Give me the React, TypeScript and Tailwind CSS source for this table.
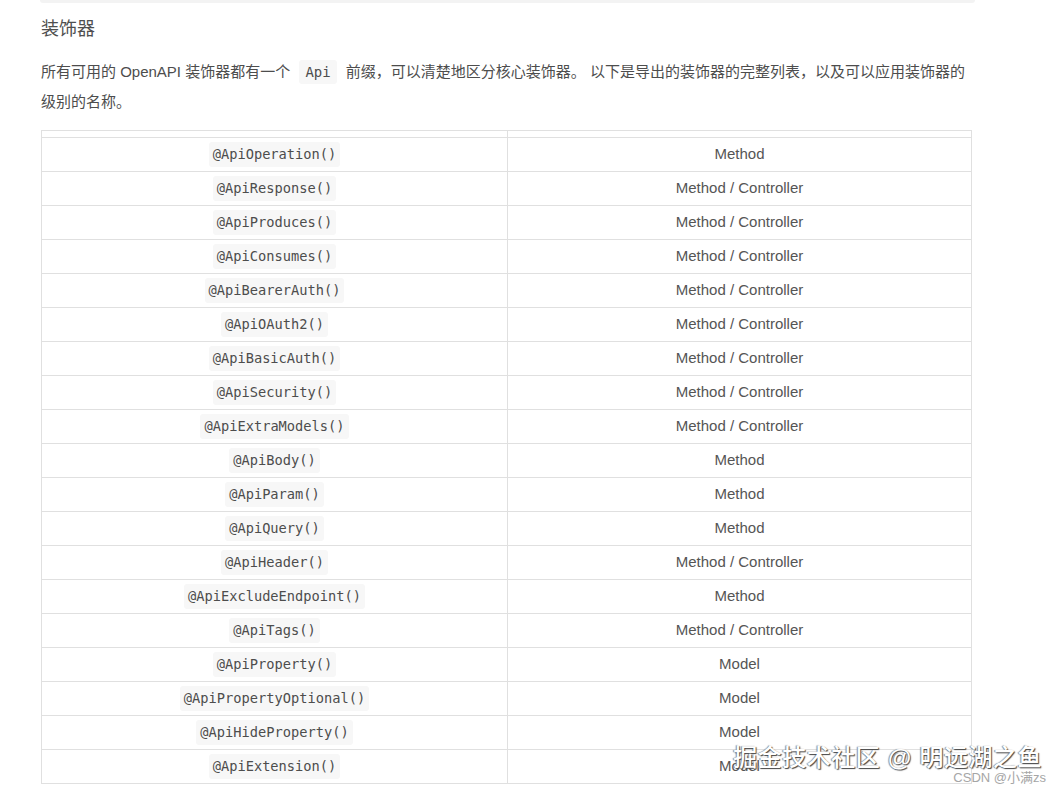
const rows: [string, string][] = [
  ["@ApiOperation()", "Method"],
  ["@ApiResponse()", "Method / Controller"],
  ["@ApiProduces()", "Method / Controller"],
  ["@ApiConsumes()", "Method / Controller"],
  ["@ApiBearerAuth()", "Method / Controller"],
  ["@ApiOAuth2()", "Method / Controller"],
  ["@ApiBasicAuth()", "Method / Controller"],
  ["@ApiSecurity()", "Method / Controller"],
  ["@ApiExtraModels()", "Method / Controller"],
  ["@ApiBody()", "Method"],
  ["@ApiParam()", "Method"],
  ["@ApiQuery()", "Method"],
  ["@ApiHeader()", "Method / Controller"],
  ["@ApiExcludeEndpoint()", "Method"],
  ["@ApiTags()", "Method / Controller"],
  ["@ApiProperty()", "Model"],
  ["@ApiPropertyOptional()", "Model"],
  ["@ApiHideProperty()", "Model"],
  ["@ApiExtension()", "Model"],
];

const mono = "font-['Consolas','DejaVu_Sans_Mono','Liberation_Mono',monospace]";

export default function App() {
  return (
    <div className="relative h-[795px] w-[1062px] overflow-hidden bg-white font-['Liberation_Sans','Noto_Sans_CJK_SC',sans-serif] text-[#4d4d4d]">
      <div className="ml-[40px] h-[3px] w-[935px] rounded-b bg-[#f3f3f3]" />

      <div className="pl-[41px] pr-[90px]">
        <h3 className="mt-[14px] text-[18px] leading-[24px] text-[#4f4f4f]">装饰器</h3>

        <p className="mt-[16px] text-[15px] leading-[30px] text-[#4d4d4d]">
          所有可用的 OpenAPI 装饰器都有一个{" "}
          <code className={`${mono} mx-[5px] rounded-[3px] bg-[#f7f7f7] px-[6px] py-[4px] text-[14px] text-[#4d4d4d]`}>Api</code>{" "}
          前缀，可以清楚地区分核心装饰器。 以下是导出的装饰器的完整列表，以及可以应用装饰器的级别的名称。
        </p>

        <table className="mt-[13px] w-[931px] border-collapse border border-[#e0e0e0]">
          <thead>
            <tr className="h-[7px]">
              <th className="w-[466px] border border-[#e0e0e0] p-0" />
              <th className="border border-[#e0e0e0] p-0" />
            </tr>
          </thead>
          <tbody>
            {rows.map(([name, level]) => (
              <tr key={name} className="h-[34px]">
                <td className="border border-[#e0e0e0] p-0 text-center">
                  <code className={`${mono} inline-block rounded-[3px] bg-[#f7f7f7] px-[4px] text-[13.7px] leading-[25px] text-[#4d4d4d]`}>
                    {name}
                  </code>
                </td>
                <td className="border border-[#e0e0e0] p-0 text-center text-[15px] text-[#555]">{level}</td>
              </tr>
            ))}
          </tbody>
        </table>
      </div>

      <div className="absolute right-[20px] top-[742px] text-[24px] font-medium leading-[32px] tracking-[0.5px] text-white [text-shadow:1px_1px_1px_#444,-1px_0_1px_#888]">
        掘金技术社区 @ 明远湖之鱼
      </div>
      <div className="absolute right-[16px] top-[769px] text-[13px] leading-[18px] text-[#a6a6a6]">CSDN @小满zs</div>
    </div>
  );
}
